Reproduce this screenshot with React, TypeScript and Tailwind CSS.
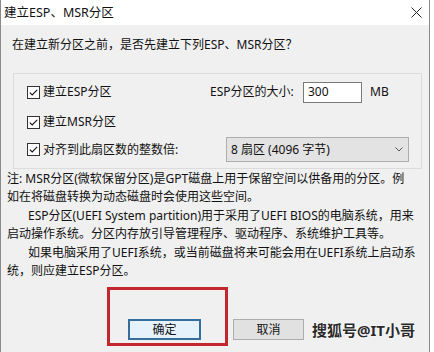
const font = "font-['Segoe_UI','Noto_Sans','Noto_Sans_CJK_SC',sans-serif]";

function CheckBox() {
  return (
    <svg width="13" height="13" viewBox="0 0 13 13" className="shrink-0">
      <rect x="0.5" y="0.5" width="12" height="12" fill="#fff" stroke="#333" />
      <path d="M2.8 6.6 L5.2 9 L10.2 3.8" fill="none" stroke="#111" strokeWidth="1.1" />
    </svg>
  );
}

function Check({ label }: { label: string }) {
  return (
    <div className="flex items-center gap-[3px]">
      <CheckBox />
      <span className="leading-[16px]">{label}</span>
    </div>
  );
}

export default function App() {
  const note = [
    { text: "注: MSR分区(微软保留分区)是GPT磁盘上用于保留空间以供备用的分区。例", indent: false },
    { text: "如在将磁盘转换为动态磁盘时会使用这些空间。", indent: false },
    { text: "ESP分区(UEFI System partition)用于采用了UEFI BIOS的电脑系统，用来", indent: true },
    { text: "启动操作系统。分区内存放引导管理程序、驱动程序、系统维护工具等。", indent: false },
    { text: "如果电脑采用了UEFI系统，或当前磁盘将来可能会用在UEFI系统上启动系", indent: true },
    { text: "统，则应建立ESP分区。", indent: false },
  ];

  return (
    <div className={`w-[434px] h-[352px] flex bg-white text-[12px] text-[#111] overflow-hidden ${font}`}>
      <div className="w-[430px] h-full flex flex-col border-l border-r border-[#8a8a8a]">
        {/* title bar */}
        <div className="h-[25px] bg-white flex items-center justify-between pl-[3px] pr-[7px]">
          <span className="leading-[16px] text-[12.5px]">建立ESP、MSR分区</span>
          <svg width="11" height="11" viewBox="0 0 11 11">
            <path d="M0.5 0.5 L10.5 10.5 M10.5 0.5 L0.5 10.5" stroke="#222" strokeWidth="1" />
          </svg>
        </div>

        {/* body */}
        <div className="flex-1 bg-[#f0f0f0] flex flex-col">
          <div className="pl-[11px] pt-[11px] leading-[18px]">在建立新分区之前，是否先建立下列ESP、MSR分区？</div>

          <div className="ml-[12px] mt-[19px] w-[409px] border border-[#dcdcdc] pl-[13px] pt-[7px] pb-[6px]">
            <div className="h-[22px] flex items-center">
              <div className="w-[183px]">
                <Check label="建立ESP分区" />
              </div>
              <span className="w-[93px] leading-[16px]">ESP分区的大小:</span>
              <div className="w-[59px] h-[21px] bg-white border border-[#7a7a7a] flex items-center pl-[4px] leading-[16px]">
                300
              </div>
              <span className="ml-[8px] leading-[16px]">MB</span>
            </div>
            <div className="h-[22px] mt-[8px] flex items-center">
              <Check label="建立MSR分区" />
            </div>
            <div className="h-[25px] mt-[4px] flex items-center">
              <div className="w-[199px]">
                <Check label="对齐到此扇区数的整数倍:" />
              </div>
              <div className="w-[183px] h-[25px] bg-[#e3e3e3] border border-[#adadad] flex items-center justify-between pl-[4px] pr-[5px]">
                <span className="leading-[16px]">8 扇区 (4096 字节)</span>
                <svg width="8" height="5" viewBox="0 0 8 5">
                  <path d="M0.5 0.5 L4 4 L7.5 0.5" fill="none" stroke="#555" strokeWidth="1" />
                </svg>
              </div>
            </div>
          </div>

          <div className="pl-[6px] mt-[1px] leading-[18.4px]">
            {note.map((l, i) => (
              <div key={i} className={`whitespace-nowrap ${l.indent ? "pl-[21px]" : ""}`}>
                {l.text}
              </div>
            ))}
          </div>

          <div className="relative mt-[39px] flex items-center h-[21px] pl-[127px] gap-[32px]">
            <button className="w-[73px] h-[21px] bg-[#e5f1fb] border-2 border-[#336e9c] flex items-center justify-center leading-[16px]">
              确定
            </button>
            <button className="w-[71px] h-[21px] bg-[#e1e1e1] border border-[#adadad] flex items-center justify-center leading-[16px]">
              取消
            </button>
            <div className="absolute left-[106px] top-[-32px] w-[121px] h-[59px] border-[3px] border-[#c1272d]" />
            <div className="absolute left-[311px] top-[2px] text-[15px] leading-[18px] font-bold text-[#2a2a2a] [text-shadow:0_0_2px_#fff,0_0_2px_#fff]">
              搜狐号@IT小哥
            </div>
          </div>
        </div>
      </div>
      <div className="flex-1 bg-white" />
    </div>
  );
}
